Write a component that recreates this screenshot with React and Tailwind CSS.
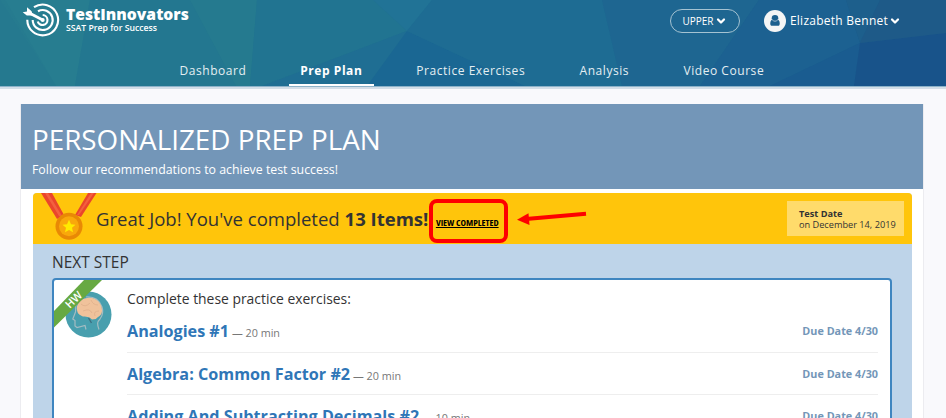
import { ChevronDown } from "lucide-react";

const navItems = [
  { label: "Dashboard" },
  { label: "Prep Plan", active: true },
  { label: "Practice Exercises" },
  { label: "Analysis" },
  { label: "Video Course" },
];

const exercises = [
  { name: "Analogies #1", time: "20 min", due: "Due Date 4/30" },
  { name: "Algebra: Common Factor #2", time: "20 min", due: "Due Date 4/30" },
  {
    name: "Adding And Subtracting Decimals #2",
    time: "10 min",
    due: "Due Date 4/30",
  },
];

function HeaderBackground() {
  return (
    <svg
      className="absolute inset-0 h-full w-full"
      viewBox="0 0 946 86"
      preserveAspectRatio="none"
    >
      <defs>
        <linearGradient id="headerFill">
          <stop offset="0" stopColor="#267b8f" />
          <stop offset="0.25" stopColor="#24778f" />
          <stop offset="0.45" stopColor="#1f6d93" />
          <stop offset="0.65" stopColor="#1e6b92" />
          <stop offset="0.8" stopColor="#1b6190" />
          <stop offset="1" stopColor="#1b578b" />
        </linearGradient>
      </defs>
      <rect width="946" height="86" fill="url(#headerFill)" />
      <path d="M0 0L56 86H0Z" fill="#25798f" />
      <path d="M5 0H90L75 86H56Z" fill="#277d90" />
      <path d="M90 0H190L236 86H75Z" fill="#237790" />
      <path d="M190 0H257L250 86H236Z" fill="#257a8f" />
      <path d="M257 0H373L407 31L262 86H250Z" fill="#217491" />
      <path d="M373 0H432L407 31Z" fill="#217396" />
      <path d="M407 31L262 86H367Z" fill="#1f6e93" />
      <path d="M407 31L367 86H525Z" fill="#1a6793" />
      <path d="M407 31L432 0H602L622 86H525Z" fill="#1e6c93" />
      <path d="M602 0H759L700 86H622Z" fill="#1e6691" />
      <path d="M759 0H846L860 43L770 86H700Z" fill="#1c6191" />
      <path d="M846 0H880L860 43Z" fill="#1d5f8c" />
      <path d="M770 86L860 43L854 86Z" fill="#1a5c90" />
      <path d="M860 43L946 33V86H854Z" fill="#18538a" />
      <path d="M880 0H946V33L860 43Z" fill="#1e5a88" />
    </svg>
  );
}

function TargetLogo() {
  return (
    <svg
      className="h-[34px] w-[38px] shrink-0"
      viewBox="0 0 38 34"
      fill="none"
      stroke="#fff"
      strokeWidth="2.1"
    >
      <path d="M12 4.2A15.4 15.4 0 1 1 5.3 16.8" />
      <path d="M16 8.2A10 10 0 1 1 10.7 17" />
      <path d="M20.7 12A5 5 0 1 1 15.7 18.5" />
      <path d="M5 8.8L20.7 17" strokeWidth="2.8" />
      <path d="M.7 9.3L5 8.5L5 4.3L9.6 8.2L10.8 12.4L4.8 12.6Z" fill="#fff" stroke="none" />
      <circle cx="20.7" cy="17" r="2" fill="#fff" stroke="none" />
    </svg>
  );
}

function UserAvatar() {
  return (
    <svg className="h-[22px] w-[22px]" viewBox="0 0 22 22">
      <circle cx="11" cy="11" r="11" fill="#f5f5f5" />
      <path
        d="M7.5 10C5.8 11.5 6 15.8 7.3 15.8H14.7C16 15.8 16.2 11.5 14.5 10Z"
        fill="#1d5f8d"
      />
      <circle cx="11" cy="8.3" r="3.3" fill="#1d5f8d" />
      <path d="M8 9.5Q11 13 14 9.5" stroke="#f5f5f5" strokeWidth=".6" fill="none" />
    </svg>
  );
}

function Header() {
  return (
    <header className="relative h-[89px] border-b-2 border-[#d3dee8] text-white">
      <div className="absolute inset-0 border-b border-[#8cb2c9]">
        <HeaderBackground />
      </div>
      <div className="relative flex h-[52px] items-start">
        <div className="ml-[22px] flex pt-[3px]">
          <TargetLogo />
          <div className="ml-[6px] pt-[3px]">
            <div className="text-[15.7px] leading-[16px] font-extrabold">
              TestInnovators
            </div>
            <div className="text-[8.7px] leading-[13px] font-semibold">
              SSAT Prep for Success
            </div>
          </div>
        </div>
        <div className="mr-[45px] ml-auto flex items-center pt-[9px]">
          <button className="flex h-[24px] w-[70px] items-center justify-center gap-[2px] rounded-full border-[1.5px] border-[#a5c3d2] text-[10px]">
            UPPER
            <ChevronDown className="h-[12px] w-[12px]" strokeWidth={4.5} />
          </button>
          <div className="ml-[24px] flex items-center">
            <UserAvatar />
            <span className="ml-[4px] text-[12px] tracking-[0.25px]">
              Elizabeth Bennet
            </span>
            <ChevronDown className="ml-px h-[12px] w-[12px]" strokeWidth={4.5} />
          </div>
        </div>
      </div>
      <nav className="relative ml-[167.5px] flex gap-[30.4px] text-[12px] tracking-[0.55px]">
        {navItems.map((item) => (
          <a
            key={item.label}
            className={
              item.active
                ? "h-[34px] border-b-2 border-white px-[11.5px] pt-[9px] leading-[20px] font-bold"
                : "h-[34px] px-[12px] pt-[9px] leading-[20px] whitespace-nowrap text-[#e4eef2]"
            }
          >
            {item.label}
          </a>
        ))}
      </nav>
    </header>
  );
}

function Medal() {
  return (
    <svg className="h-[50px] w-[64px]" viewBox="0 0 64 50">
      <path d="M8 0H19L31 22L24 26Z" fill="#ea452c" />
      <path d="M55 0H63.5L48 24L42 22Z" fill="#ea452c" />
      <path d="M12 0H15L29 23H26Z" fill="#f3603f" />
      <path d="M58 0H61L46 22H44Z" fill="#f3603f" />
      <circle cx="36" cy="33.3" r="13.5" fill="#e98905" />
      <circle cx="36" cy="33.3" r="10" fill="#f9a80b" />
      <path
        d="M36 26.8L38 31.3L42.5 31.7L39 34.8L40 39.3L36 36.9L32 39.3L33 34.8L29.5 31.7L34 31.3Z"
        fill="#ffea00"
      />
    </svg>
  );
}

// Red box and arrow pointing at the link
function Callout() {
  return (
    <svg
      className="pointer-events-none absolute top-[5px] left-[395px] h-[46px] w-[162px]"
      viewBox="0 0 162 46"
    >
      <rect
        x="3"
        y="3"
        width="75"
        height="40"
        rx="6"
        fill="none"
        stroke="#fe0000"
        strokeWidth="4"
      />
      <path d="M98 21L158 15.8" stroke="#fe0000" strokeWidth="4" />
      <path d="M89 21.8L100.5 15.3L101.5 27Z" fill="#fe0000" />
    </svg>
  );
}

function Banner() {
  return (
    <div className="relative flex h-[51px] items-start rounded-t-[4px] bg-[#ffc50b]">
      <div className="w-[63px] shrink-0">
        <Medal />
      </div>
      <div className="text-[18.55px] leading-[51px] whitespace-nowrap text-[#333]">
        Great Job! You've completed <b>13 Items!</b>
      </div>
      <a className="ml-[7.5px] text-[9.3px] leading-[60px] font-bold [font-stretch:75%] whitespace-nowrap text-black underline">
        VIEW COMPLETED
      </a>
      <Callout />
      <div className="mt-[8px] mr-[8px] ml-auto h-[35px] w-[117px] bg-[#ffdb6b] pt-[8px] pl-[12px] text-[9.2px] leading-[10.5px] whitespace-nowrap text-[#333]">
        <b className="block">Test Date</b>
        on December 14, 2019
      </div>
    </div>
  );
}

function BrainIcon() {
  return (
    <svg className="h-[47px] w-[47px]" viewBox="0 0 47 47">
      <circle cx="23.5" cy="23.5" r="23" fill="#489fae" />
      <path
        d="M12 11C10 14 11 18 10.5 21L7.8 28L10 29.5V35L12 36.5L20 34.5L21 38.5M34 38.5C32 33 32 31 35 28C38 24 38 19 37 16C34 8 28 5.5 21 6"
        fill="none"
        stroke="#a3bcc2"
        strokeWidth="1.2"
      />
      <path
        d="M12.2 20C10.5 14 15 8 22 7C30 5 37 12 37 19C37.5 25 32 26 31 28L27 28.5C23 24 19 27 16 24.5C14 24 12.5 22 12.2 20Z"
        fill="#f0c29b"
      />
      <path
        d="M16 13Q20 17 25 12M18 20Q25 17 27 22M26 9Q28 14 33 14M30 25Q28 20 34 20"
        fill="none"
        stroke="#dcae8a"
        strokeWidth=".7"
      />
      <path d="M23.5 27L26.5 32" stroke="#3d6f80" strokeWidth="1.4" />
    </svg>
  );
}

function StepCard() {
  return (
    <div className="relative mr-[20px] ml-[19px] flex h-[200px] overflow-hidden rounded-[4px] border-2 border-[#3f86c0] bg-white">
      <div className="w-[73px] shrink-0 pt-[11px] pl-[11px]">
        <BrainIcon />
      </div>
      <svg className="absolute top-0 left-0 h-[50px] w-[50px]" viewBox="0 0 50 50">
        <path d="M30 0H48L0 47.5V31Z" fill="#67a942" />
        <text
          x="20"
          y="23.5"
          fill="#fff"
          fontSize="11"
          fontWeight="600"
          textAnchor="middle"
          transform="rotate(-45 20 20)"
        >
          HW
        </text>
      </svg>
      <div className="mr-[12px] flex-1">
        <p className="mt-[9.4px] h-[21px] text-[13.9px] leading-[20px] text-[#333]">
          Complete these practice exercises:
        </p>
        {exercises.map((exercise) => (
          <div
            key={exercise.name}
            className="flex h-[42.3px] items-center justify-between border-b border-[#eee] pt-px whitespace-nowrap"
          >
            <div className="text-[10.8px] text-[#777]">
              <span className="text-[16.18px] font-bold text-[#2f76b7]">
                {exercise.name}
              </span>{" "}
              — {exercise.time}
            </div>
            <div className="text-[10.8px] font-bold text-[#7396b8]">
              {exercise.due}
            </div>
          </div>
        ))}
      </div>
    </div>
  );
}

export default function App() {
  return (
    <div className="h-[418px] overflow-hidden bg-[#f9f9fc] font-['Open_Sans',sans-serif]">
      <Header />
      <main className="mt-[15px] mr-[22px] ml-[20px] h-[400px] border-x border-[#ececf0] bg-white">
        <div className="h-[85px] bg-[#7396b8] pt-[17px] pl-[11px] text-white">
          <h1 className="text-[27.8px] leading-[37px]">PERSONALIZED PREP PLAN</h1>
          <p className="text-[12.35px] leading-[23px]">
            Follow our recommendations to achieve test success!
          </p>
        </div>
        <section className="mt-[4px] mr-[11px] ml-[12px] h-[300px] rounded-t-[4px] bg-[#bed4e9]">
          <Banner />
          <h2 className="ml-[19px] h-[34px] text-[15.5px] leading-[36px] text-[#333]">
            NEXT STEP
          </h2>
          <StepCard />
        </section>
      </main>
    </div>
  );
}
